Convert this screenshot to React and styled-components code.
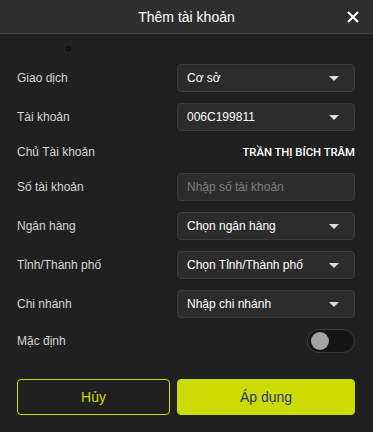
import React from "react";
import styled, { createGlobalStyle } from "styled-components";

const GlobalStyle = createGlobalStyle`
	html, body {
		margin: 0;
		padding: 0;
		background: #1f201f;
	}
	body {
		font-family: "Liberation Sans", Arial, sans-serif;
	}
`;

const Modal = styled("div")`
	width: 373px;
	height: 432px;
	background: #1f201f;
	color: #e6e6e6;
	position: relative;
	overflow: hidden;
`;

const Header = styled("div")`
	height: 33px;
	background: #2e2e2e;
	border-bottom: 1px solid #444444;
	display: flex;
	align-items: center;
	justify-content: center;
	position: relative;
`;

const Title = styled("h2")`
	margin: 0;
	font-size: 14px;
	font-weight: 400;
	color: #ffffff;
`;

const CloseButton = styled("button")`
	position: absolute;
	right: 13px;
	top: 10px;
	width: 14px;
	height: 14px;
	padding: 0;
	border: none;
	background: none;
	cursor: pointer;
	display: flex;
`;

const Dot = styled("span")`
	position: absolute;
	left: 66px;
	top: 46px;
	width: 3px;
	height: 3px;
	border: 1px solid #050505;
	border-radius: 50%;
`;

const Body = styled("div")`
	padding: 30px 18px 0 17px;
	display: flex;
	flex-direction: column;
	gap: 11px;
`;

const Row = styled("div")`
	display: grid;
	grid-template-columns: 160px 1fr;
	align-items: center;
	min-height: ${(p) => p.$height || 28}px;
`;

const Label = styled("span")`
	font-size: 12px;
	color: #d6d6d6;
`;

const Select = styled("div")`
	height: 28px;
	box-sizing: border-box;
	background: #2c2c2c;
	border: 1px solid #3c3c3c;
	border-radius: 4px;
	display: flex;
	align-items: center;
	justify-content: space-between;
	padding: 0 15px 0 9px;
	font-size: 12px;
	color: ${(p) => (p.$placeholder ? "#7d7d7d" : "#ffffff")};
`;

const Caret = styled("span")`
	width: 0;
	height: 0;
	border-left: 5px solid transparent;
	border-right: 5px solid transparent;
	border-top: 5px solid #dcdcdc;
`;

const Owner = styled("span")`
	justify-self: end;
	font-family: Roboto, "Liberation Sans", sans-serif;
	font-size: 11.3px;
	font-weight: 500;
	color: #ffffff;
`;

const Toggle = styled("div")`
	justify-self: end;
	width: 48px;
	height: 24px;
	box-sizing: border-box;
	border-radius: 12px;
	background: #141514;
	border: 1px solid #3c3c3c;
	display: flex;
	align-items: center;
	padding: 0 3px;
`;

const Knob = styled("span")`
	width: 18px;
	height: 18px;
	border-radius: 50%;
	background: #a3a3a3;
`;

const Actions = styled("div")`
	display: grid;
	grid-template-columns: 153px 1fr;
	gap: 7px;
	margin-top: 15px;
`;

const Button = styled("button")`
	height: 36px;
	border-radius: 4px;
	font-family: "Liberation Sans", Arial, sans-serif;
	font-size: 14px;
	cursor: pointer;
	border: 1px solid #cddc00;
	background: ${(p) => (p.$primary ? "#cddc00" : "transparent")};
	color: ${(p) => (p.$primary ? "#2b3572" : "#cddc00")};
`;

const fields = [
	{ label: "Giao dịch", value: "Cơ sở" },
	{ label: "Tài khoản", value: "006C199811" },
];

const fields2 = [
	{ label: "Ngân hàng", value: "Chọn ngân hàng" },
	{ label: "Tỉnh/Thành phố", value: "Chọn Tỉnh/Thành phố" },
	{ label: "Chi nhánh", value: "Nhập chi nhánh" },
];

function SelectRow({ label, value }) {
	return (
		<Row>
			<Label>{label}</Label>
			<Select>
				{value}
				<Caret />
			</Select>
		</Row>
	);
}

export default function App() {
	return (
		<Modal>
			<GlobalStyle />
			<Header>
				<Title>Thêm tài khoản</Title>
				<CloseButton aria-label="close">
					<svg width="14" height="14" viewBox="0 0 14 14">
						<path d="M2 2 L12 12 M12 2 L2 12" stroke="#ffffff" strokeWidth="2" />
					</svg>
				</CloseButton>
			</Header>
			<Dot />
			<Body>
				{fields.map((f) => (
					<SelectRow key={f.label} {...f} />
				))}
				<Row $height={20}>
					<Label>Chủ Tài khoản</Label>
					<Owner>TRẦN THỊ BÍCH TRÂM</Owner>
				</Row>
				<Row>
					<Label>Số tài khoản</Label>
					<Select $placeholder>Nhập số tài khoản</Select>
				</Row>
				{fields2.map((f) => (
					<SelectRow key={f.label} {...f} />
				))}
				<Row $height={24}>
					<Label>Mặc định</Label>
					<Toggle>
						<Knob />
					</Toggle>
				</Row>
				<Actions>
					<Button>Hủy</Button>
					<Button $primary>Áp dụng</Button>
				</Actions>
			</Body>
		</Modal>
	);
}
